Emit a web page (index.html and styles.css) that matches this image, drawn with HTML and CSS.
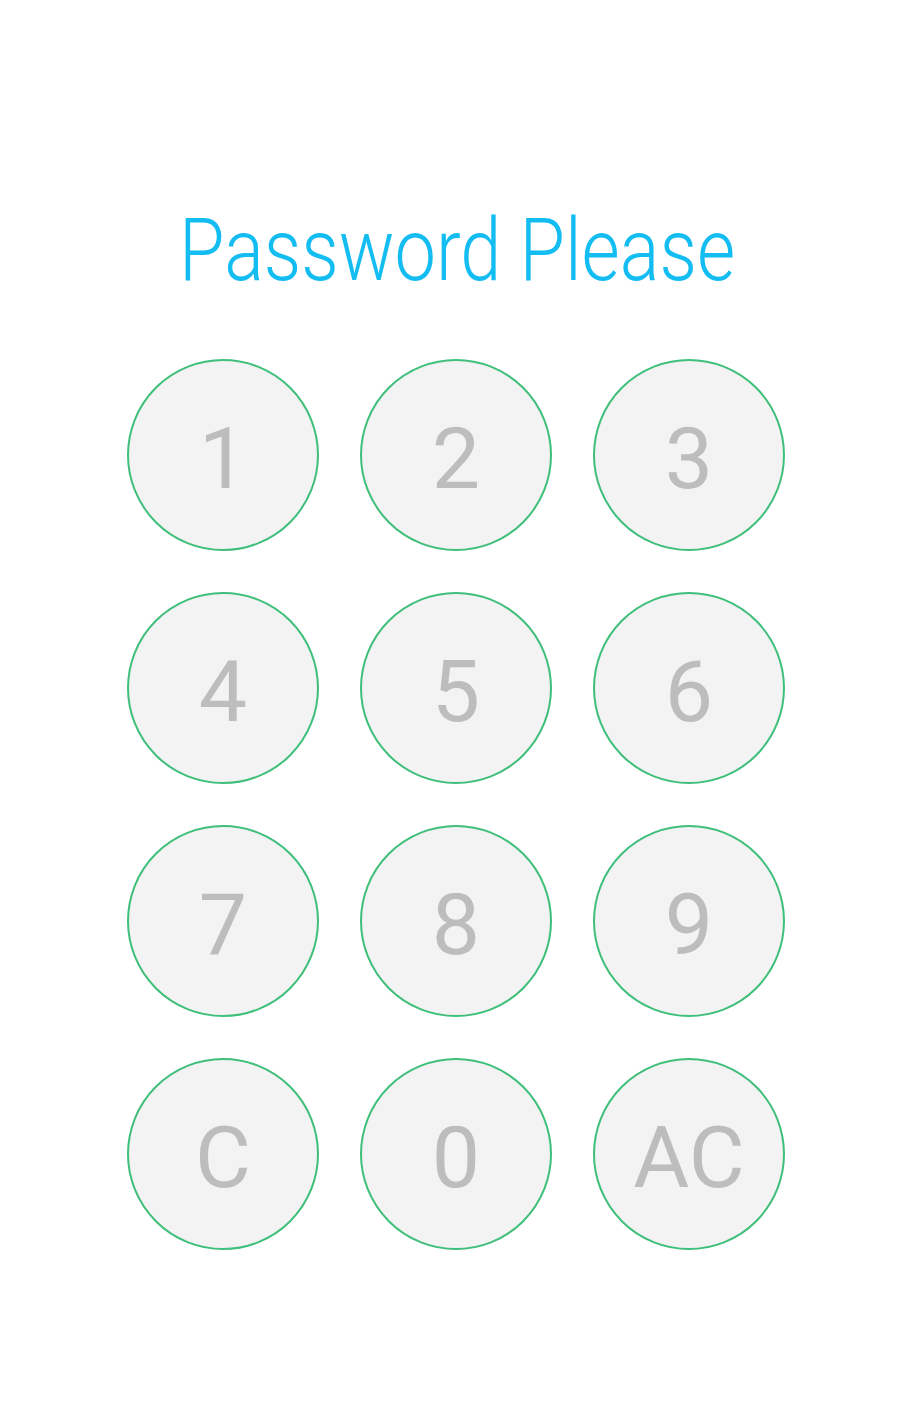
FILE: index.html
```html
<!DOCTYPE html>
<html>
<head>
<meta charset="utf-8">
<link rel="stylesheet" href="styles.css">
</head>
<body>
<div class="page">
  <h1 class="title"><span class="title-text">Password Please</span></h1>
  <div class="keypad">
    <button class="key">1</button>
    <button class="key">2</button>
    <button class="key">3</button>
    <button class="key">4</button>
    <button class="key">5</button>
    <button class="key">6</button>
    <button class="key">7</button>
    <button class="key">8</button>
    <button class="key">9</button>
    <button class="key">C</button>
    <button class="key">0</button>
    <button class="key">AC</button>
  </div>
</div>
</body>
</html>
```
FILE: styles.css
```css
html, body {
  margin: 0;
  padding: 0;
  background: #ffffff;
}
.page {
  width: 906px;
  height: 1404px;
  padding-top: 200px;
  box-sizing: border-box;
}
.title {
  margin: 0 0 0 8px;
  text-align: center;
  font-family: Roboto, "Noto Sans", sans-serif;
  font-weight: 300;
  font-size: 87px;
  line-height: 100px;
  color: #13bdf2;
}
.title-text {
  display: inline-block;
  transform: scaleX(0.85);
}
.keypad {
  margin: 59px 0 0 127px;
  width: 658px;
  display: grid;
  grid-template-columns: repeat(3, 192px);
  grid-auto-rows: 192px;
  column-gap: 41px;
  row-gap: 41px;
}
.key {
  width: 192px;
  height: 192px;
  box-sizing: border-box;
  border-radius: 50%;
  border: 2px solid #3fbf7a;
  background: #f3f3f3;
  color: #bdbdbd;
  font-family: Roboto, "Noto Sans", sans-serif;
  font-weight: 400;
  font-size: 86px;
  line-height: 1;
  padding: 7px 0 0 0;
  display: flex;
  align-items: center;
  justify-content: center;
}
```
